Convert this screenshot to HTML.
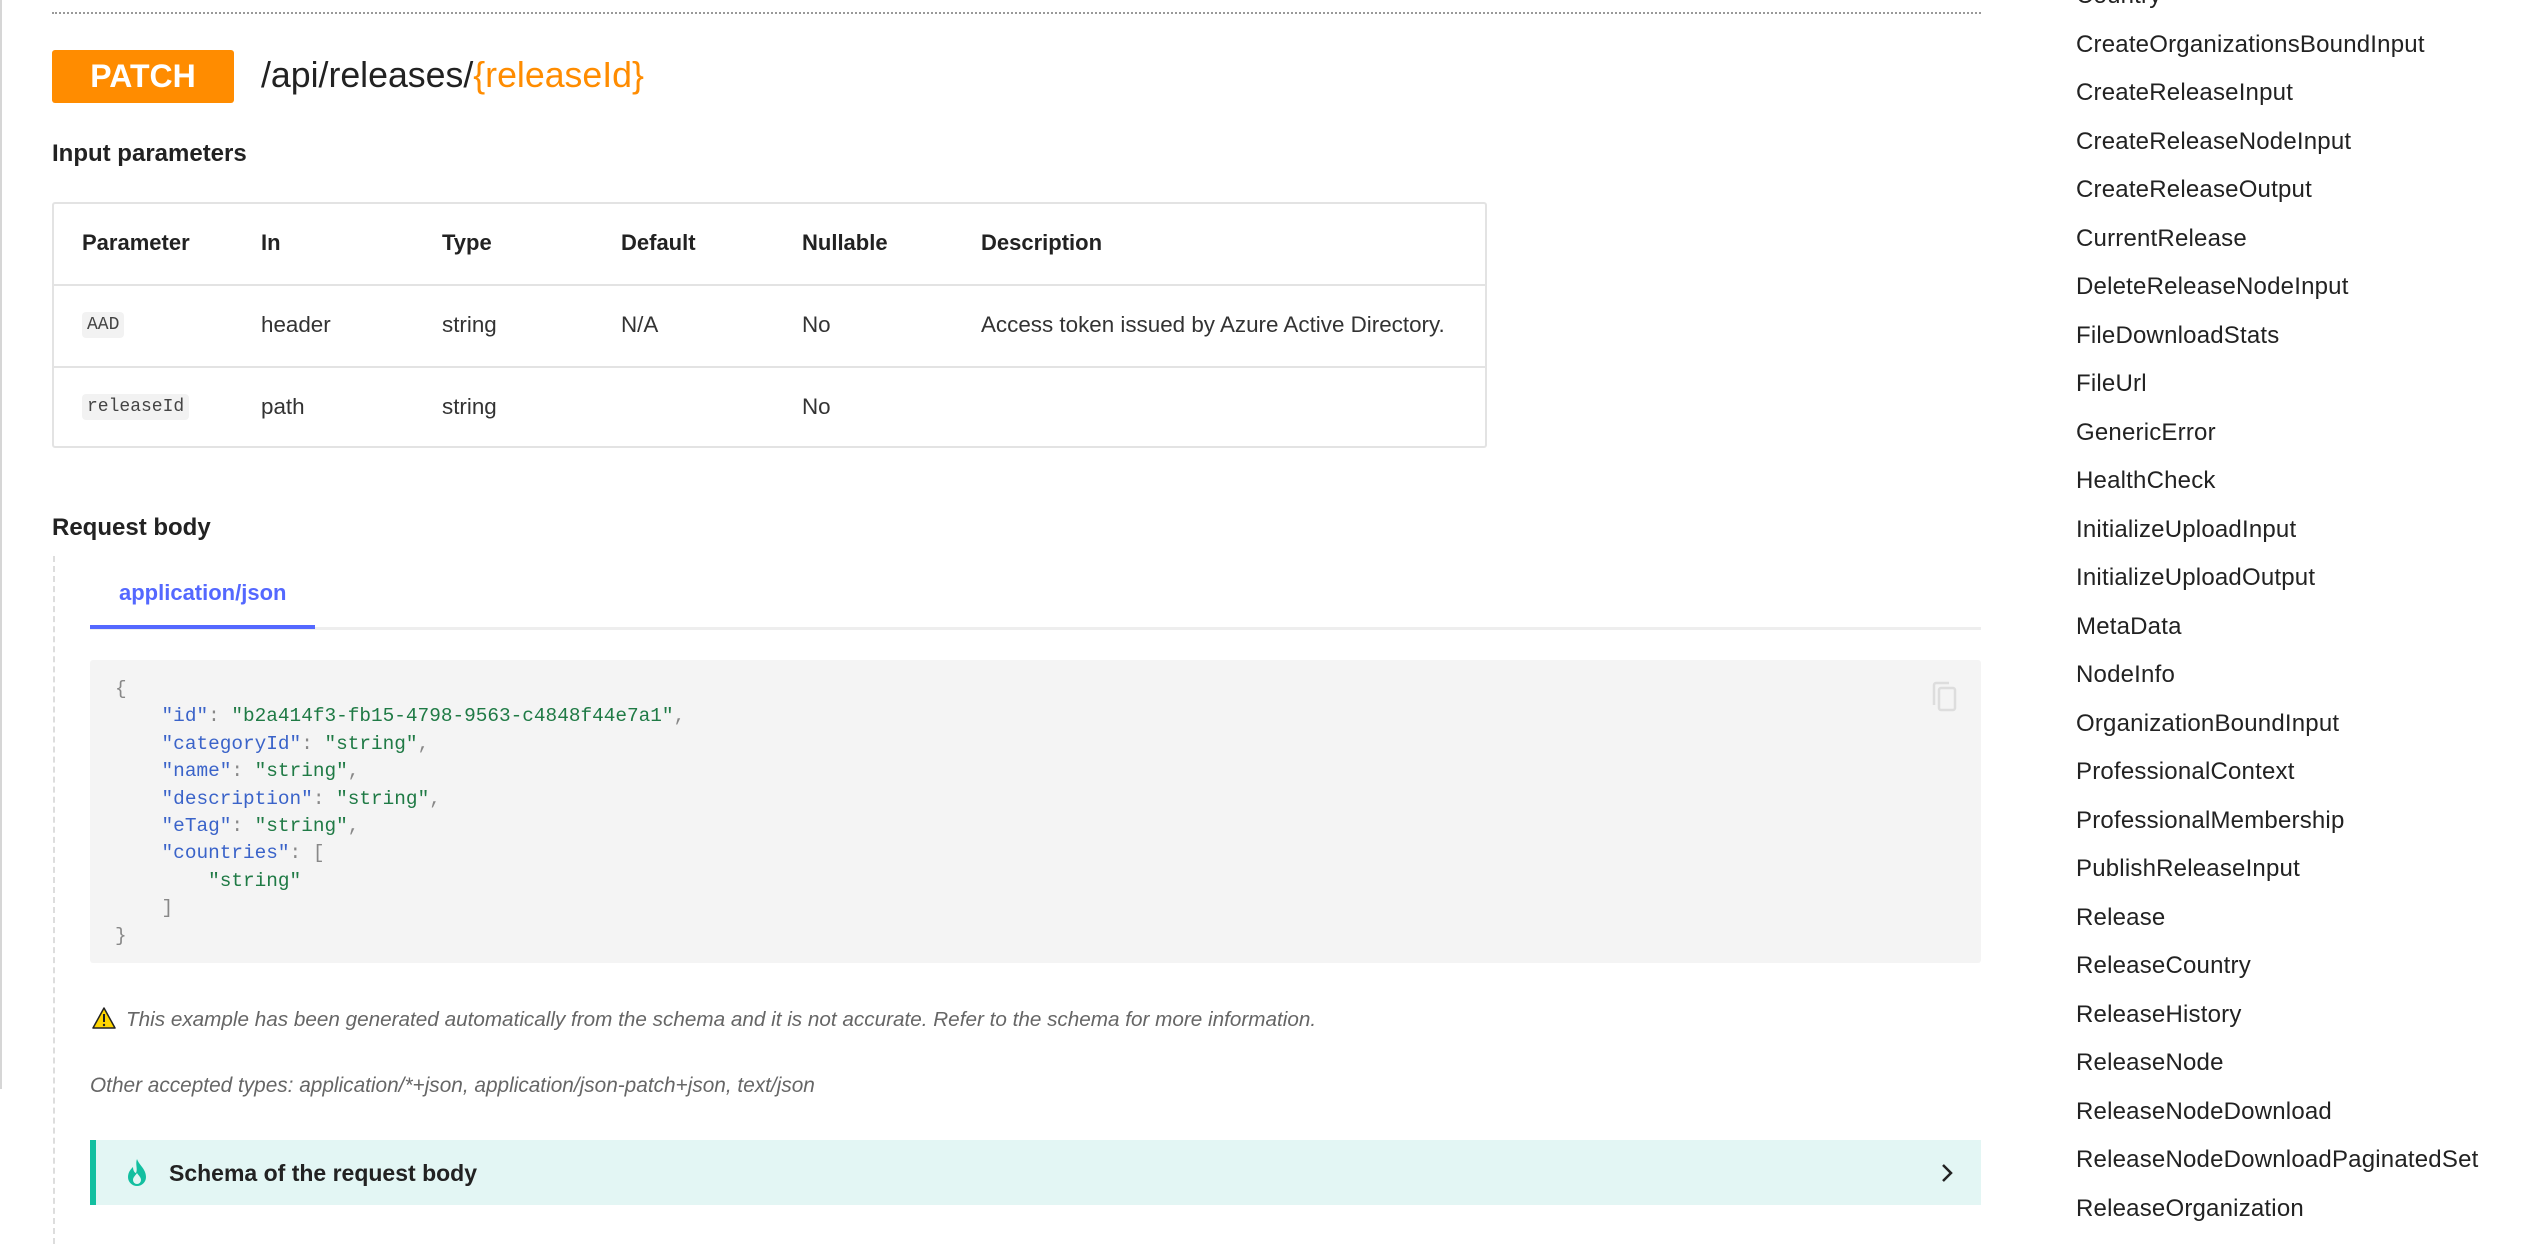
<!DOCTYPE html>
<html><head><meta charset="utf-8"><style>
*{margin:0;padding:0;box-sizing:border-box}
body{width:2529px;height:1244px;overflow:hidden;background:#fff;font-family:"Liberation Sans",sans-serif;color:#222;position:relative}
.a{position:absolute;white-space:nowrap}
.th{font-weight:bold;font-size:22px;color:#222}
.td{font-size:22.4px;color:#333}
.chip{font-family:"Liberation Mono",monospace;font-size:18px;color:#444;background:#f2f2f2;border-radius:4px;padding:3px 5px}
.code{font-family:"Liberation Mono",monospace;font-size:19.4px;line-height:27.4px;color:#888}
.k{color:#3a63c9}.s{color:#1f7a45}
.side{font-size:24px;color:#222;letter-spacing:0.2px}
</style></head><body>
<div class="a" style="left:0;top:0;width:2px;height:1089px;background:#d6d6d6"></div>
<div class="a" style="left:52px;top:12px;width:1929px;border-top:2px dotted #999"></div>
<div class="a" style="left:52px;top:50px;width:182px;height:53px;background:#ff8c00;border-radius:3px;color:#fff;font-weight:bold;font-size:32px;line-height:53px;text-align:center">PATCH</div>
<div class="a" style="left:261px;top:55px;font-size:35.7px;color:#222">/api/releases/<span style="color:#ff8c00">{releaseId}</span></div>
<div class="a" style="left:52px;top:140px;font-size:24px;font-weight:bold">Input parameters</div>
<div class="a" style="left:52px;top:202px;width:1435px;height:246px;border:2px solid #e3e3e3;border-radius:3px"></div>
<div class="a" style="left:53px;top:284px;width:1433px;height:2px;background:#e3e3e3"></div>
<div class="a" style="left:53px;top:366px;width:1433px;height:2px;background:#e3e3e3"></div>
<div class="a th" style="left:82px;top:230px">Parameter</div>
<div class="a th" style="left:261px;top:230px">In</div>
<div class="a th" style="left:442px;top:230px">Type</div>
<div class="a th" style="left:621px;top:230px">Default</div>
<div class="a th" style="left:802px;top:230px">Nullable</div>
<div class="a th" style="left:981px;top:230px">Description</div>
<div class="a chip" style="left:82px;top:312px">AAD</div>
<div class="a td" style="left:261px;top:312px">header</div>
<div class="a td" style="left:442px;top:312px">string</div>
<div class="a td" style="left:621px;top:312px">N/A</div>
<div class="a td" style="left:802px;top:312px">No</div>
<div class="a td" style="left:981px;top:312px">Access token issued by Azure Active Directory.</div>
<div class="a chip" style="left:82px;top:394px">releaseId</div>
<div class="a td" style="left:261px;top:394px">path</div>
<div class="a td" style="left:442px;top:394px">string</div>
<div class="a td" style="left:802px;top:394px">No</div>
<div class="a" style="left:52px;top:514px;font-size:24px;font-weight:bold">Request body</div>
<div class="a" style="left:53px;top:556px;height:688px;border-left:2px dashed #ddd"></div>
<div class="a" style="left:119px;top:580px;font-size:22px;font-weight:bold;color:#5468ff">application/json</div>
<div class="a" style="left:90px;top:627px;width:1891px;height:3px;background:#eee"></div>
<div class="a" style="left:90px;top:625px;width:225px;height:4px;background:#5468ff"></div>
<div class="a" style="left:90px;top:660px;width:1891px;height:303px;background:#f4f4f4;border-radius:3px"></div>
<svg class="a" style="left:1930px;top:680px" width="30" height="34" viewBox="0 0 30 34"><path d="M4 25V5a2 2 0 0 1 2-2h13" fill="none" stroke="#ddd" stroke-width="2.5"/><rect x="9" y="8" width="16" height="22" rx="2" fill="none" stroke="#ddd" stroke-width="2.5"/></svg>
<div class="a code" style="left:115px;top:676px">{<br>&nbsp;&nbsp;&nbsp;&nbsp;<span class="k">"id"</span>: <span class="s">"b2a414f3-fb15-4798-9563-c4848f44e7a1"</span>,<br>&nbsp;&nbsp;&nbsp;&nbsp;<span class="k">"categoryId"</span>: <span class="s">"string"</span>,<br>&nbsp;&nbsp;&nbsp;&nbsp;<span class="k">"name"</span>: <span class="s">"string"</span>,<br>&nbsp;&nbsp;&nbsp;&nbsp;<span class="k">"description"</span>: <span class="s">"string"</span>,<br>&nbsp;&nbsp;&nbsp;&nbsp;<span class="k">"eTag"</span>: <span class="s">"string"</span>,<br>&nbsp;&nbsp;&nbsp;&nbsp;<span class="k">"countries"</span>: [<br>&nbsp;&nbsp;&nbsp;&nbsp;&nbsp;&nbsp;&nbsp;&nbsp;<span class="s">"string"</span><br>&nbsp;&nbsp;&nbsp;&nbsp;]<br>}</div>
<svg class="a" style="left:92px;top:1007px" width="24" height="22" viewBox="0 0 24 22"><path d="M12 1L23 21H1Z" fill="#ffd600" stroke="#222" stroke-width="1.5" stroke-linejoin="round"/><path d="M12 7v8" stroke="#222" stroke-width="2"/><circle cx="12" cy="18" r="1.2" fill="#222"/></svg>
<div class="a" style="left:126px;top:1008px;font-size:20.7px;font-style:italic;color:#666">This example has been generated automatically from the schema and it is not accurate. Refer to the schema for more information.</div>
<div class="a" style="left:90px;top:1074px;font-size:20.8px;font-style:italic;color:#666">Other accepted types: application/*+json, application/json-patch+json, text/json</div>
<div class="a" style="left:90px;top:1140px;width:1891px;height:65px;background:#e3f6f4;border-left:6px solid #13bfa0"></div>
<svg class="a" style="left:126px;top:1158px" width="22" height="30" viewBox="0 0 22 30"><path d="M11 1C13 7 20 11 20 19a9 9 0 0 1-18 0c0-5 3-8 5-10 0 4 2 6 3 6 2-4-1-9 1-14z" fill="#13bfa0"/><path d="M11 26a4 4 0 0 1-4-4c0-3 3-5 4-7 1 2 4 4 4 7a4 4 0 0 1-4 4z" fill="#e3f6f4"/></svg>
<div class="a" style="left:169px;top:1160px;font-size:23px;font-weight:bold;color:#222">Schema of the request body</div>
<svg class="a" style="left:1940px;top:1162px" width="14" height="22" viewBox="0 0 14 22"><path d="M3 3l8 8-8 8" fill="none" stroke="#222" stroke-width="2.5"/></svg>
<div class="a side" style="left:2076px;top:-28px;line-height:48.5px">Country<br>CreateOrganizationsBoundInput<br>CreateReleaseInput<br>CreateReleaseNodeInput<br>CreateReleaseOutput<br>CurrentRelease<br>DeleteReleaseNodeInput<br>FileDownloadStats<br>FileUrl<br>GenericError<br>HealthCheck<br>InitializeUploadInput<br>InitializeUploadOutput<br>MetaData<br>NodeInfo<br>OrganizationBoundInput<br>ProfessionalContext<br>ProfessionalMembership<br>PublishReleaseInput<br>Release<br>ReleaseCountry<br>ReleaseHistory<br>ReleaseNode<br>ReleaseNodeDownload<br>ReleaseNodeDownloadPaginatedSet<br>ReleaseOrganization</div>
</body></html>
